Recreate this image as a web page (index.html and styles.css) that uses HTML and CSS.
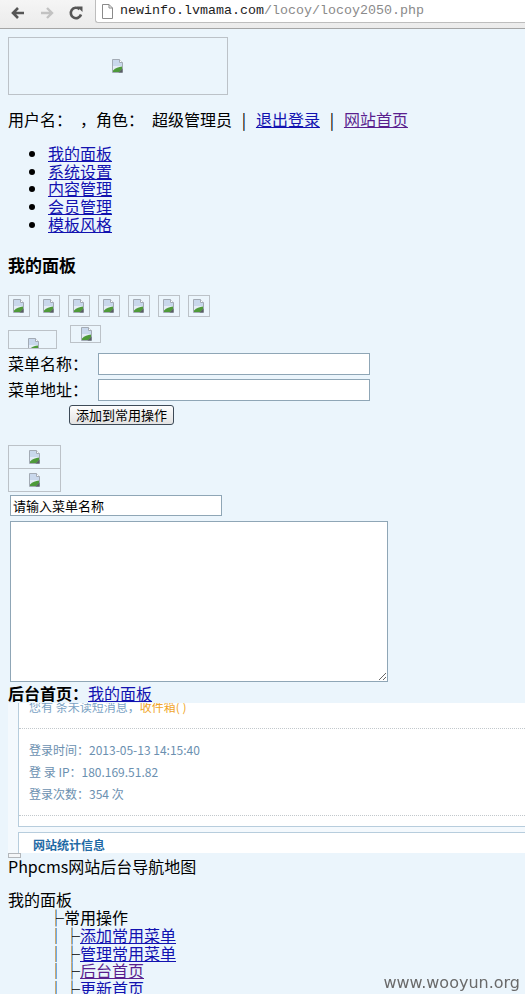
FILE: index.html
```html
<!DOCTYPE html>
<html lang="zh-CN">
<head>
<meta charset="utf-8">
<title>locoy2050.php</title>
<link rel="stylesheet" href="styles.css">
</head>
<body>
<svg class="defs" width="0" height="0" aria-hidden="true">
  <symbol id="broken" viewBox="0 0 16 16">
    <path d="M2.5 1.5h7l3 3v10h-10z" fill="#e4ecf7" stroke="#a3abb5"/>
    <path d="M3 2h6.5v3h2.5v3H3z" fill="#c9d8ec"/>
    <path d="M9.5 1.5v3h3" fill="#fff" stroke="#a3abb5"/>
    <path d="M3 14V12.5C5.5 10 8.5 8.8 12 8.5V11.5L9.5 14z" fill="#4e9a3a"/>
    <path d="M12.5 10.5v4h-4z" fill="#5a5f66"/>
  </symbol>
</svg>

<header class="toolbar">
  <span class="nav back">
    <svg viewBox="0 0 16 16" width="16" height="16"><path d="M14 8H3M8 3L3 8l5 5" fill="none" stroke="#565656" stroke-width="2.6"/></svg>
  </span>
  <span class="nav fwd">
    <svg viewBox="0 0 16 16" width="16" height="16"><path d="M2 8h11M8 3l5 5-5 5" fill="none" stroke="#c2c2c2" stroke-width="2.4"/></svg>
  </span>
  <span class="nav reload">
    <svg viewBox="0 0 16 16" width="16" height="16"><path d="M13 9.5A5.2 5.2 0 1 1 11.6 4.2" fill="none" stroke="#565656" stroke-width="2.6"/><path d="M9 1.5h5.5V7z" fill="#565656"/></svg>
  </span>
  <div class="omnibox">
    <svg class="pageicon" viewBox="0 0 11 15" width="11" height="15"><path d="M0.5 0.5h6.5l3.5 3.5v10.5h-10z" fill="#fff" stroke="#8a8a8a"/><path d="M7 0.5v3.5h3.5" fill="none" stroke="#8a8a8a"/></svg>
    <span class="host">newinfo.lvmama.com</span><span class="path">/locoy/locoy2050.php</span>
  </div>
</header>

<main class="page">
  <div class="logo bimg"><svg class="bi"><use href="#broken"/></svg></div>

  <p class="userbar">用户名： ，角色： 超级管理员 <span class="sep">|</span> <a href="#">退出登录</a> <span class="sep">|</span> <a href="#" class="visited">网站首页</a></p>

  <ul class="menu">
    <li><a href="#">我的面板</a></li>
    <li><a href="#">系统设置</a></li>
    <li><a href="#">内容管理</a></li>
    <li><a href="#">会员管理</a></li>
    <li><a href="#">模板风格</a></li>
  </ul>

  <h3 class="title">我的面板</h3>

  <div class="icons">
    <span class="bimg sq"><svg class="bi"><use href="#broken"/></svg></span>
    <span class="bimg sq"><svg class="bi"><use href="#broken"/></svg></span>
    <span class="bimg sq"><svg class="bi"><use href="#broken"/></svg></span>
    <span class="bimg sq"><svg class="bi"><use href="#broken"/></svg></span>
    <span class="bimg sq"><svg class="bi"><use href="#broken"/></svg></span>
    <span class="bimg sq"><svg class="bi"><use href="#broken"/></svg></span>
    <span class="bimg sq"><svg class="bi"><use href="#broken"/></svg></span>
  </div>

  <div class="tabs">
    <span class="bimg tab-a"><svg class="bi"><use href="#broken"/></svg></span>
    <span class="bimg tab-b"><svg class="bi"><use href="#broken"/></svg></span>
  </div>

  <form class="addform">
    <div class="field"><label>菜单名称：</label><input type="text"></div>
    <div class="field"><label>菜单地址：</label><input type="text"></div>
    <button type="button" class="add-btn">添加到常用操作</button>
  </form>

  <div class="stack">
    <span class="bimg st"><svg class="bi"><use href="#broken"/></svg></span>
    <span class="bimg st"><svg class="bi"><use href="#broken"/></svg></span>
  </div>

  <input class="search" type="text" value="请输入菜单名称">
  <textarea class="notes"></textarea>

  <div class="crumb"><b>后台首页：</b><a href="#">我的面板</a></div>

  <div class="frame">
    <div class="panel">
      <div class="msg">您有 条未读短消息，<span class="inbox">收件箱( )</span></div>
      <div class="info">
        <div>登录时间：2013-05-13 14:15:40</div>
        <div>登 录 IP：180.169.51.82</div>
        <div>登录次数：354 次</div>
      </div>
    </div>
    <div class="panel2">
      <div class="stat-title">网站统计信息</div>
    </div>
  </div>
  <div class="frame-foot"></div>

  <p class="maptitle">Phpcms网站后台导航地图</p>

  <div class="tree">
    <div>我的面板</div>
    <div class="lv"><span class="bx">├</span>常用操作</div>
    <div class="lv"><span class="bx">│</span><span class="bx">├</span><a href="#">添加常用菜单</a></div>
    <div class="lv"><span class="bx">│</span><span class="bx">├</span><a href="#">管理常用菜单</a></div>
    <div class="lv"><span class="bx">│</span><span class="bx">├</span><a href="#" class="visited">后台首页</a></div>
    <div class="lv"><span class="bx">│</span><span class="bx">├</span><a href="#">更新首页</a></div>
    <div class="lv"><span class="bx">│</span><span class="bx">├</span><a href="#">更新URL</a></div>
  </div>
</main>

<div class="watermark">www.wooyun.org</div>
</body>
</html>
```

FILE: styles.css
```css
html, body {
  margin: 0;
  padding: 0;
}

body {
  background: #ebf5fc;
  font-family: "Noto Sans CJK SC", "DejaVu Sans", sans-serif;
  font-size: 16px;
  line-height: 17.75px;
  color: #000;
  overflow: hidden;
}

.defs {
  position: absolute;
  width: 0;
  height: 0;
}

a {
  color: #1212b0;
  text-decoration: underline;
}

a.visited {
  color: #5a1f8e;
}

/* ---------- browser toolbar ---------- */
.toolbar {
  display: flex;
  align-items: flex-start;
  height: 28px;
  border-bottom: 1px solid #a5a5a5;
  background: linear-gradient(#f5f5f5, #ebebeb);
}

.nav {
  display: block;
  width: 16px;
  height: 16px;
  margin-top: 5px;
}

.nav svg {
  display: block;
}

.back {
  margin-left: 10px;
}

.fwd {
  margin-left: 13px;
}

.reload {
  margin-left: 13px;
}

.omnibox {
  flex: 1;
  display: flex;
  align-items: center;
  height: 23px;
  margin-left: 11px;
  padding-left: 6px;
  box-sizing: border-box;
  background: #fff;
  border-left: 1px solid #bdbdbd;
  border-bottom: 1px solid #bdbdbd;
  border-radius: 0 0 0 3px;
  font-family: "Liberation Mono", "DejaVu Sans Mono", monospace;
  font-size: 13.33px;
  line-height: 16px;
}

.pageicon {
  display: block;
  margin-right: 7px;
  margin-top: 1px;
}

.host {
  color: #1d1d1d;
}

.path {
  color: #8a8a8a;
}

/* ---------- page ---------- */
.page {
  padding: 8px;
}

.bimg {
  display: flex;
  box-sizing: border-box;
  border: 1px solid #bcc2c8;
  overflow: hidden;
}

.bi {
  display: block;
  flex: none;
  width: 16px;
  height: 16px;
}

.logo {
  width: 220px;
  height: 58px;
  align-items: center;
  justify-content: center;
}

.userbar {
  margin: 16px 0;
  word-spacing: 4.4px;
}

.sep {
  display: inline-block;
  width: 8px;
  text-align: center;
}

.menu {
  margin: 16px 0;
  padding-left: 40px;
}

.title {
  font-size: 17px;
  line-height: 20px;
  font-weight: bold;
  margin: 21px 0 20px;
}

.icons {
  display: flex;
  gap: 8px;
}

.sq {
  width: 22px;
  height: 22px;
  align-items: center;
  justify-content: center;
}

.tabs {
  display: flex;
  align-items: flex-start;
  margin-top: 8px;
}

.tab-a {
  width: 49px;
  height: 19px;
  margin-top: 5px;
  justify-content: center;
  padding: 6px 0 0 3px;
}

.tab-b {
  width: 31px;
  height: 18px;
  margin-left: 13px;
  padding: 0 0 0 8px;
}

.addform {
  margin: 4px 0 0;
}

.field {
  display: flex;
  align-items: center;
  height: 22px;
  margin-bottom: 4px;
}

.field label {
  width: 90px;
}

.field input {
  width: 272px;
  height: 22px;
  box-sizing: border-box;
  margin: 0;
  border: 1px solid #8fa6b6;
  background: #fff;
  padding: 0 3px;
}

.add-btn {
  display: block;
  height: 20px;
  margin: 1px 0 0 61px;
  padding: 0 6px;
  font-family: "Noto Sans CJK SC", sans-serif;
  font-size: 13px;
  line-height: 16px;
  color: #000;
  background: linear-gradient(#fdfdfd, #e2e2e2);
  border: 1px solid #3d4a57;
  border-radius: 3px;
}

.stack {
  display: flex;
  flex-direction: column;
  margin-top: 20px;
}

.st {
  width: 53px;
  height: 24px;
  align-items: center;
  justify-content: center;
}

.st + .st {
  margin-top: -1px;
}

.search {
  display: block;
  width: 212px;
  height: 21px;
  box-sizing: border-box;
  margin: 3px 0 0 2px;
  padding: 0 2px;
  border: 1px solid #8fa6b6;
  font-family: "Noto Sans CJK SC", sans-serif;
  font-size: 13px;
  color: #000;
}

.notes {
  display: block;
  width: 378px;
  height: 161px;
  box-sizing: border-box;
  margin: 5px 0 0 2px;
  border: 1px solid #8fa6b6;
  background: #fff;
}

.crumb {
  height: 19px;
  line-height: 19px;
  margin-top: 2px;
}

.crumb b {
  font-weight: bold;
}

/* ---------- embedded frame ---------- */
.frame {
  height: 150px;
  overflow: hidden;
  margin-right: -8px;
  background: #f4f9fd;
  font-size: 12px;
}

.panel {
  margin: -4px 0 0 10px;
  padding-bottom: 10px;
  background: #fff;
  border-left: 1px solid #b7cddd;
  border-bottom: 1px solid #b7cddd;
}

.msg {
  line-height: 16px;
  padding: 0 0 13px 10px;
  border-bottom: 1px dotted #c2c8cc;
  color: #79a2c4;
}

.inbox {
  color: #f0a62a;
}

.info {
  padding: 10px 0 10px 10px;
  line-height: 22px;
  border-bottom: 1px dotted #c2c8cc;
  color: #6b90b0;
}

.panel2 {
  margin: 5px 0 0 10px;
  background: #fff;
  border-left: 1px solid #b7cddd;
  border-top: 1px solid #b7cddd;
  height: 40px;
}

.stat-title {
  padding: 4px 0 0 14px;
  line-height: 16px;
  font-weight: bold;
  color: #1f6aa5;
}

.frame-foot {
  width: 13px;
  height: 5px;
  box-sizing: border-box;
  border: 1px solid #b2b6ba;
  background: #f4f6f8;
}

.maptitle {
  margin: 0;
}

.tree {
  margin-top: 16px;
}

.lv {
  padding-left: 40px;
}

.bx {
  display: inline-block;
  width: 16px;
  text-align: center;
  color: #000;
}

.watermark {
  position: fixed;
  right: 5px;
  bottom: 2px;
  font-family: "DejaVu Sans", sans-serif;
  font-size: 16px;
  line-height: 18px;
  color: #6a6a6a;
}
```
